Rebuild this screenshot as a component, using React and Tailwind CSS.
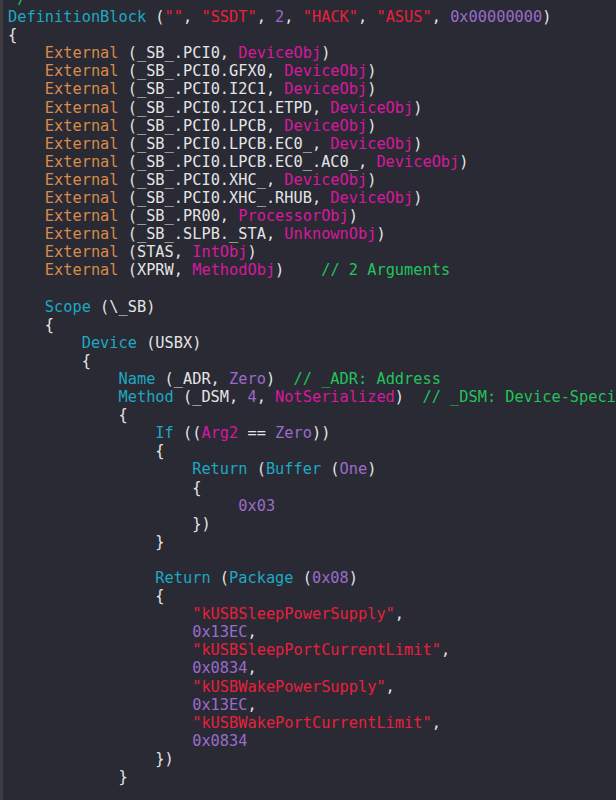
import React from "react";

const C = {
  t: "text-[#e4e4e6]",
  k: "text-[#1ea8c4]",
  e: "text-[#d98b4c]",
  m: "text-[#d8189e]",
  s: "text-[#ea1f3d]",
  n: "text-[#9a6ccb]",
  c: "text-[#22c35c]",
};

const ind = (n) => " ".repeat(n);

const ext = (path, type, extra) => [
  ["", "    "],
  ["e", "External"],
  ["t", ` (${path}, `],
  ["m", type],
  ["t", ")"],
  ...(extra ? extra : []),
];

const lines = [
  [["c", "*/"]],
  [
    ["k", "DefinitionBlock"],
    ["t", " ("],
    ["s", '""'],
    ["t", ", "],
    ["s", '"SSDT"'],
    ["t", ", "],
    ["n", "2"],
    ["t", ", "],
    ["s", '"HACK"'],
    ["t", ", "],
    ["s", '"ASUS"'],
    ["t", ", "],
    ["n", "0x00000000"],
    ["t", ")"],
  ],
  [["t", "{"]],
  ext("_SB_.PCI0", "DeviceObj"),
  ext("_SB_.PCI0.GFX0", "DeviceObj"),
  ext("_SB_.PCI0.I2C1", "DeviceObj"),
  ext("_SB_.PCI0.I2C1.ETPD", "DeviceObj"),
  ext("_SB_.PCI0.LPCB", "DeviceObj"),
  ext("_SB_.PCI0.LPCB.EC0_", "DeviceObj"),
  ext("_SB_.PCI0.LPCB.EC0_.AC0_", "DeviceObj"),
  ext("_SB_.PCI0.XHC_", "DeviceObj"),
  ext("_SB_.PCI0.XHC_.RHUB", "DeviceObj"),
  ext("_SB_.PR00", "ProcessorObj"),
  ext("_SB_.SLPB._STA", "UnknownObj"),
  ext("STAS", "IntObj"),
  ext("XPRW", "MethodObj", [["c", "    // 2 Arguments"]]),
  [],
  [["t", ind(4)], ["k", "Scope"], ["t", " (\\_SB)"]],
  [["t", ind(4) + "{"]],
  [["t", ind(8)], ["k", "Device"], ["t", " (USBX)"]],
  [["t", ind(8) + "{"]],
  [
    ["t", ind(12)],
    ["k", "Name"],
    ["t", " (_ADR, "],
    ["n", "Zero"],
    ["t", ")  "],
    ["c", "// _ADR: Address"],
  ],
  [
    ["t", ind(12)],
    ["k", "Method"],
    ["t", " (_DSM, "],
    ["n", "4"],
    ["t", ", "],
    ["m", "NotSerialized"],
    ["t", ")  "],
    ["c", "// _DSM: Device-Specific Method"],
  ],
  [["t", ind(12) + "{"]],
  [
    ["t", ind(16)],
    ["k", "If"],
    ["t", " (("],
    ["m", "Arg2"],
    ["t", " == "],
    ["n", "Zero"],
    ["t", "))"],
  ],
  [["t", ind(16) + "{"]],
  [
    ["t", ind(20)],
    ["k", "Return"],
    ["t", " ("],
    ["k", "Buffer"],
    ["t", " ("],
    ["n", "One"],
    ["t", ")"],
  ],
  [["t", ind(20) + "{"]],
  [["t", ind(25)], ["n", "0x03"]],
  [["t", ind(20) + "})"]],
  [["t", ind(16) + "}"]],
  [],
  [
    ["t", ind(16)],
    ["k", "Return"],
    ["t", " ("],
    ["k", "Package"],
    ["t", " ("],
    ["n", "0x08"],
    ["t", ")"],
  ],
  [["t", ind(16) + "{"]],
  [["t", ind(20)], ["s", '"kUSBSleepPowerSupply"'], ["t", ","]],
  [["t", ind(20)], ["n", "0x13EC"], ["t", ","]],
  [["t", ind(20)], ["s", '"kUSBSleepPortCurrentLimit"'], ["t", ","]],
  [["t", ind(20)], ["n", "0x0834"], ["t", ","]],
  [["t", ind(20)], ["s", '"kUSBWakePowerSupply"'], ["t", ","]],
  [["t", ind(20)], ["n", "0x13EC"], ["t", ","]],
  [["t", ind(20)], ["s", '"kUSBWakePortCurrentLimit"'], ["t", ","]],
  [["t", ind(20)], ["n", "0x0834"]],
  [["t", ind(16) + "})"]],
  [["t", ind(12) + "}"]],
];

export default function App() {
  return (
    <div className="w-[616px] h-[800px] bg-[#292a33] flex overflow-hidden">
      <div className="w-[3px] shrink-0 bg-[#3c3c41]" />
      <div
        className="flex-1 pl-[5px] -mt-[10px] text-[15.3px] leading-[18.1px] whitespace-pre overflow-hidden"
        style={{ fontFamily: '"DejaVu Sans Mono", monospace' }}
      >
        {lines.map((segs, i) => (
          <div key={i} className="h-[18.1px]">
            {segs.map(([color, text], j) => (
              <span key={j} className={C[color] || C.t}>
                {text}
              </span>
            ))}
          </div>
        ))}
      </div>
    </div>
  );
}
